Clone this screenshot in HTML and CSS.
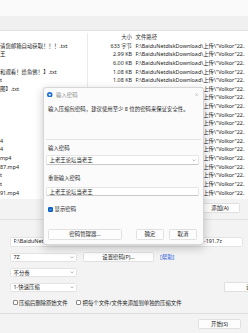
FILE: index.html
```html
<!DOCTYPE html>
<html lang="zh-CN">
<head>
    <meta charset="UTF-8">
    <meta name="viewport" content="width=device-width, initial-scale=1.0">
    <title>添加到压缩文件</title>
    <link rel="stylesheet" href="styles.css">
</head>
<body>
    <div class="window">
        <div class="titlebar"></div>
        <div class="toolbar"></div>

        <div class="filelist">
            <div class="row head">
                <div class="col-name"></div>
                <div class="col-size">大小</div>
                <div class="col-path">文件路径</div>
            </div>
            <div class="row"><div class="col-name">请您邮箱自动获取！！！.txt</div><div class="col-size">633 字节</div><div class="col-path">F:\BaiduNetdiskDownload\上传\"Volkor"22.</div></div>
            <div class="row"><div class="col-name">王</div><div class="col-size">2.99 KB</div><div class="col-path">F:\BaiduNetdiskDownload\上传\"Volkor"22.</div></div>
            <div class="row"><div class="col-name"></div><div class="col-size">6.00 KB</div><div class="col-path">F:\BaiduNetdiskDownload\上传\"Volkor"22.</div></div>
            <div class="row"><div class="col-name">和观看！给鱼佛！】.txt</div><div class="col-size">1.08 KB</div><div class="col-path">F:\BaiduNetdiskDownload\上传\"Volkor"22.</div></div>
            <div class="row"><div class="col-name">t</div><div class="col-size">1.08 KB</div><div class="col-path">F:\BaiduNetdiskDownload\上传\"Volkor"22.</div></div>
            <div class="row"><div class="col-name">图】.txt</div><div class="col-size">1.08 KB</div><div class="col-path">F:\BaiduNetdiskDownload\上传\"Volkor"22.</div></div>
            <div class="row"><div class="col-name"></div><div class="col-size">1.20 MB</div><div class="col-path">F:\BaiduNetdiskDownload\上传\"Volkor"22.</div></div>
            <div class="row"><div class="col-name"></div><div class="col-size">1.31 MB</div><div class="col-path">F:\BaiduNetdiskDownload\上传\"Volkor"22.</div></div>
            <div class="row"><div class="col-name"></div><div class="col-size">1.18 MB</div><div class="col-path">F:\BaiduNetdiskDownload\上传\"Volkor"22.</div></div>
            <div class="row"><div class="col-name"></div><div class="col-size">1.42 MB</div><div class="col-path">F:\BaiduNetdiskDownload\上传\"Volkor"22.</div></div>
            <div class="row"><div class="col-name"></div><div class="col-size">1.09 MB</div><div class="col-path">F:\BaiduNetdiskDownload\上传\"Volkor"22.</div></div>
            <div class="row"><div class="col-name">4</div><div class="col-size">25.6 MB</div><div class="col-path">F:\BaiduNetdiskDownload\上传\"Volkor"22.</div></div>
            <div class="row"><div class="col-name">4</div><div class="col-size">31.2 MB</div><div class="col-path">F:\BaiduNetdiskDownload\上传\"Volkor"22.</div></div>
            <div class="row"><div class="col-name">mp4</div><div class="col-size">18.7 MB</div><div class="col-path">F:\BaiduNetdiskDownload\上传\"Volkor"22.</div></div>
            <div class="row"><div class="col-name">87.mp4</div><div class="col-size">22.4 MB</div><div class="col-path">F:\BaiduNetdiskDownload\上传\"Volkor"22.</div></div>
            <div class="row"><div class="col-name">t</div><div class="col-size">1.08 KB</div><div class="col-path">F:\BaiduNetdiskDownload\上传\"Volkor"22.</div></div>
            <div class="row"><div class="col-name">t</div><div class="col-size">1.08 KB</div><div class="col-path">F:\BaiduNetdiskDownload\上传\"Volkor"22.</div></div>
            <div class="row"><div class="col-name">91.mp4</div><div class="col-size">27.9 MB</div><div class="col-path">F:\BaiduNetdiskDownload\上传\"Volkor"22.</div></div>
        </div>

        <div class="addbar">
            <button class="btn btn-add">添加(A)</button>
        </div>

        <div class="options">
            <div class="field field-path"><span class="path-head">F:\BaiduNetdiskDownload\上传\"Volkor"22.05.28 精选合集\Volkor-2022</span><span class="path-tail">-191.7z</span></div>
            <div class="opt-row">
                <div class="combo">7Z<svg class="chev" viewBox="0 0 8 5"><path d="M1 1l3 3 3-3" fill="none" stroke="#777" stroke-width="1"/></svg></div>
                <button class="btn btn-pass">设置密码(P)...</button>
                <a class="help">[帮助]</a>
            </div>
            <div class="opt-row">
                <div class="combo">不分卷<svg class="chev" viewBox="0 0 8 5"><path d="M1 1l3 3 3-3" fill="none" stroke="#777" stroke-width="1"/></svg></div>
            </div>
            <div class="opt-row">
                <div class="combo">1-快速压缩<svg class="chev" viewBox="0 0 8 5"><path d="M1 1l3 3 3-3" fill="none" stroke="#777" stroke-width="1"/></svg></div>
                <button class="btn btn-more">设置(E)...</button>
            </div>
            <div class="checks">
                <label class="check"><span class="box"></span>压缩后删除原始文件</label>
                <label class="check"><span class="box"></span>把每个文件/文件夹添加到单独的压缩文件</label>
            </div>
        </div>

        <div class="footer">
            <button class="btn btn-start">开始(S)</button>
        </div>
    </div>

    <div class="dialog">
        <div class="dlg-title">
            <svg class="dlg-icon" viewBox="0 0 12 12"><circle cx="6" cy="6" r="6" fill="#1d6fd1"/><circle cx="6" cy="6" r="2.3" fill="#fff"/></svg>
            <span class="dlg-caption">输入密码</span>
            <svg class="dlg-close" viewBox="0 0 10 10"><path d="M1 1l8 8M9 1l-8 8" stroke="#999" stroke-width="1.2"/></svg>
        </div>
        <p class="dlg-desc">输入压缩包密码，建议使用至少 8 位的密码来保证安全性。</p>
        <div class="dlg-sep"></div>
        <div class="dlg-label">输入密码</div>
        <div class="dlg-input">上老王论坛当老王<svg class="chev" viewBox="0 0 8 5"><path d="M1 1l3 3 3-3" fill="none" stroke="#888" stroke-width="1"/></svg></div>
        <div class="dlg-label dlg-label-2">重新输入密码</div>
        <div class="dlg-input dlg-input-2">上老王论坛当老王</div>
        <label class="dlg-check"><span class="box checked"><svg viewBox="0 0 10 10"><path d="M2 5.2l2.2 2.2L8.2 3" fill="none" stroke="#fff" stroke-width="1.6"/></svg></span>显示密码</label>
        <div class="dlg-buttons">
            <button class="btn btn-manager">密码管理器...</button>
            <button class="btn btn-ok">确定</button>
            <button class="btn btn-cancel">取消</button>
        </div>
    </div>
</body>
</html>
```

FILE: styles.css
```css
* {
    box-sizing: border-box;
}
html, body {
    margin: 0;
}
body {
    width: 248px;
    height: 333px;
    overflow: hidden;
    position: relative;
    background-color: #f3f3f3;
    font-family: "Noto Sans", "Noto Sans CJK SC", sans-serif;
    font-size: 5.4px;
    color: #1b1b1b;
}
.window {
    width: 248px;
    height: 333px;
    display: flex;
    flex-direction: column;
}
.titlebar {
    height: 16px;
    background-color: #fafafa;
}
.toolbar {
    height: 15px;
    background-color: #f0f0f0;
    border-bottom: 1px solid #e2e2e2;
}

/* file list */
.filelist {
    height: 168px;
    padding-top: 2px;
    background-color: #fff;
    overflow: hidden;
}
.row {
    display: grid;
    grid-template-columns: 88px 46px auto;
    height: 8.65px;
    line-height: 8.65px;
    white-space: nowrap;
}
.row > div {
    overflow: hidden;
}
.col-name {
    border-right: 1px solid #ebebeb;
}
.col-size {
    text-align: right;
    padding-right: 2px;
}
.col-path {
    padding-left: 1.5px;
}
.head {
    color: #333;
}

/* buttons */
.btn {
    display: flex;
    align-items: center;
    justify-content: center;
    flex-shrink: 0;
    margin: 0;
    padding: 0;
    font-family: inherit;
    font-size: 5.4px;
    color: #1b1b1b;
    background-color: #fdfdfd;
    border: 1px solid #e0e0e0;
    border-radius: 1.5px;
    white-space: nowrap;
}
.addbar {
    height: 21px;
    border-bottom: 1px solid #e2e2e2;
    display: flex;
    justify-content: flex-end;
    padding: 4px 8px 0 0;
}
.btn-add {
    width: 40px;
    height: 10px;
}

/* options */
.options {
    height: 94px;
    padding: 17px 5px 0 10px;
    border-bottom: 1px solid #dedede;
}
.field, .combo {
    background-color: #fff;
    border: 1px solid #e3e3e3;
    border-radius: 1.5px;
    white-space: nowrap;
    overflow: hidden;
}
.field-path {
    display: flex;
    height: 9.5px;
    line-height: 7.5px;
    padding: 0 20px 0 2.5px;
}
.path-head {
    flex: 1;
    overflow: hidden;
}
.opt-row {
    display: flex;
    align-items: center;
    height: 10px;
    margin-top: 5.5px;
}
.opt-row:first-of-type {
    margin-top: 7px;
}
.opt-row + .opt-row + .opt-row {
    margin-top: 4.5px;
}
.combo {
    width: 67px;
    height: 9px;
    flex-shrink: 0;
    display: flex;
    align-items: center;
    justify-content: space-between;
    padding: 0 2.5px;
}
.chev {
    width: 4px;
    height: 2.5px;
    flex-shrink: 0;
}
.btn-pass {
    width: 71px;
    height: 10px;
    margin-left: 6px;
}
.help {
    margin-left: 6px;
    color: #2a5bd7;
    white-space: nowrap;
}
.btn-more {
    width: 24px;
    height: 10px;
    margin-left: 147px;
    justify-content: flex-start;
    padding-left: 21px;
    border-right: none;
    border-radius: 1.5px 0 0 1.5px;
    overflow: hidden;
}
.checks {
    display: flex;
    gap: 8.5px;
    height: 6px;
    margin-top: 7.5px;
    padding-left: 2.5px;
}
.check {
    display: flex;
    align-items: center;
    gap: 1.5px;
    line-height: 6px;
    white-space: nowrap;
}
.box {
    width: 5px;
    height: 5px;
    background-color: #fff;
    border: 1px solid #8a8a8a;
    border-radius: 1px;
    flex-shrink: 0;
}
.footer {
    flex: 1;
    display: flex;
    justify-content: flex-end;
    padding: 5px 7px 0 0;
}
.btn-start {
    width: 43px;
    height: 9.5px;
}

/* password dialog */
.dialog {
    position: absolute;
    left: 43px;
    top: 87px;
    width: 161px;
    height: 158px;
    background-color: #fbfbfb;
    border: 1px solid #d6d6d6;
    border-radius: 3px;
    box-shadow: 0 3px 10px rgba(0, 0, 0, 0.22);
}
.dlg-title {
    height: 13px;
    display: flex;
    align-items: center;
    padding: 0 5px 0 3px;
}
.dlg-icon {
    width: 5.5px;
    height: 5.5px;
}
.dlg-caption {
    margin-left: 3.5px;
    color: #8c8c8c;
}
.dlg-close {
    width: 3.4px;
    height: 3.4px;
    margin-left: auto;
}
.dlg-desc {
    margin: 3.7px 0 0;
    padding-left: 4px;
    line-height: 8px;
    white-space: nowrap;
}
.dlg-sep {
    height: 1px;
    margin: 26.3px 2px 0;
    background-color: #e4e4e4;
}
.dlg-label {
    margin-top: 4px;
    padding-left: 4px;
    line-height: 8px;
}
.dlg-label-2 {
    margin-top: 9px;
}
.dlg-input {
    height: 10px;
    margin: 3px 4px 0 2px;
    padding: 0 2px 0 2.5px;
    display: flex;
    align-items: center;
    justify-content: space-between;
    background-color: #fff;
    border: 1px solid #e6e6e6;
    border-bottom-color: #c8c8c8;
    border-radius: 1.5px;
}
.dlg-input-2 {
    height: 9.5px;
    margin-top: 5px;
}
.dlg-check {
    display: flex;
    align-items: center;
    gap: 1.5px;
    height: 6px;
    margin-top: 10px;
    padding-left: 4px;
}
.box.checked {
    display: flex;
    background-color: #0a62c6;
    border-color: #0a62c6;
}
.box.checked svg {
    width: 100%;
    height: 100%;
}
.dlg-buttons {
    display: flex;
    height: 11px;
    margin-top: 16.5px;
    padding: 0 6px 0 4px;
}
.btn-manager {
    width: 74px;
}
.btn-ok {
    width: 28px;
    margin-left: 14px;
}
.btn-cancel {
    width: 28px;
    margin-left: 5px;
}
```
